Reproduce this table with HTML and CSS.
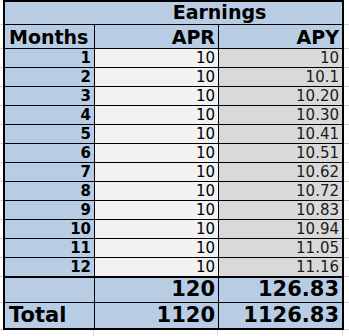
FILE: index.html
```html
<!DOCTYPE html>
<html>
<head>
<meta charset="utf-8">
<link rel="stylesheet" href="styles.css">
</head>
<body>
<div class="sheet">
  <div class="stub stub-left">
    <div class="g g1"></div><div class="g g2"></div>
    <div class="g gd"></div><div class="g gd"></div><div class="g gd"></div><div class="g gd"></div>
    <div class="g gd"></div><div class="g gd"></div><div class="g gd"></div><div class="g gd"></div>
    <div class="g gd"></div><div class="g gd"></div><div class="g gd"></div><div class="g gd"></div>
    <div class="g gs"></div><div class="g gt"></div>
  </div>
  <div class="tbl">
    <div class="c title"><span>Earnings</span></div>
    <div class="c hd left">Months</div><div class="c hd">APR</div><div class="c hd">APY</div>
    <div class="c mo">1</div><div class="c apr">10</div><div class="c apy">10</div>
    <div class="c mo">2</div><div class="c apr">10</div><div class="c apy">10.1</div>
    <div class="c mo">3</div><div class="c apr">10</div><div class="c apy">10.20</div>
    <div class="c mo">4</div><div class="c apr">10</div><div class="c apy">10.30</div>
    <div class="c mo">5</div><div class="c apr">10</div><div class="c apy">10.41</div>
    <div class="c mo">6</div><div class="c apr">10</div><div class="c apy">10.51</div>
    <div class="c mo">7</div><div class="c apr">10</div><div class="c apy">10.62</div>
    <div class="c mo">8</div><div class="c apr">10</div><div class="c apy">10.72</div>
    <div class="c mo">9</div><div class="c apr">10</div><div class="c apy">10.83</div>
    <div class="c mo">10</div><div class="c apr">10</div><div class="c apy">10.94</div>
    <div class="c mo">11</div><div class="c apr">10</div><div class="c apy">11.05</div>
    <div class="c mo">12</div><div class="c apr">10</div><div class="c apy">11.16</div>
    <div class="c sum"></div><div class="c sum">120</div><div class="c sum">126.83</div>
    <div class="c tot left">Total</div><div class="c tot">1120</div><div class="c tot">1126.83</div>
  </div>
  <div class="stub stub-right">
    <div class="g g1"></div><div class="g g2"></div>
    <div class="g gd"></div><div class="g gd"></div><div class="g gd"></div><div class="g gd"></div>
    <div class="g gd"></div><div class="g gd"></div><div class="g gd"></div><div class="g gd"></div>
    <div class="g gd"></div><div class="g gd"></div><div class="g gd"></div><div class="g gd"></div>
    <div class="g gs"></div><div class="g gt"></div>
  </div>
</div>
<div class="below">
  <div class="bcol b1"></div><div class="bcol b2"></div><div class="bcol b3"></div>
</div>
</body>
</html>
```

FILE: styles.css
```css
html, body {
  margin: 0;
  padding: 0;
  background: #ffffff;
}
body {
  font-family: "DejaVu Sans", Verdana, sans-serif;
  color: #000;
  width: 349px;
  height: 336px;
  overflow: hidden;
}
.sheet {
  display: flex;
  align-items: flex-start;
}
.stub {
  display: flex;
  flex-direction: column;
}
.stub-left { width: 3px; }
.stub-right { width: 5px; }
.g { border-bottom: 1px solid #d4d4d4; }
.g1 { height: 24px; }
.g2 { height: 23px; }
.gd { height: 18px; }
.gs { height: 25px; }
.gt { height: 26px; }

.tbl {
  display: grid;
  grid-template-columns: 89px 123px 123px;
  grid-template-rows: 22px 23px repeat(12, 18px) 25px 25px;
  gap: 1px;
  padding: 2px;
  background: #000;
}
.c {
  display: flex;
  align-items: flex-end;
  justify-content: flex-end;
  padding-right: 3px;
  box-sizing: border-box;
  white-space: nowrap;
}
.title {
  grid-column: 1 / 4;
  background: #b8cce4;
  justify-content: center;
  padding: 0 0 1px 92px;
  font-weight: bold;
  font-size: 19px;
  line-height: 22px;
}
.hd {
  background: #b8cce4;
  font-weight: bold;
  font-size: 19px;
  line-height: 22px;
}
.left {
  justify-content: flex-start;
  padding-left: 4px;
}
.mo {
  background: #b8cce4;
  font-weight: bold;
  font-size: 15px;
  line-height: 17px;
  padding-right: 3px;
}
.apr {
  background: #f2f2f2;
  font-size: 15px;
  line-height: 17px;
}
.apy {
  background: #d9d9d9;
  font-size: 15px;
  line-height: 17px;
  color: #1a1a1a;
}
.sum, .tot {
  background: #b8cce4;
  font-weight: bold;
  font-size: 21px;
  line-height: 24px;
  padding-bottom: 1px;
}
.sum { border-top: 1px solid #000; }

.below {
  display: flex;
  height: 6px;
}
.bcol {
  border-right: 1px solid #dadada;
}
.b1 { width: 93px; }
.b2 { width: 123px; }
.b3 { width: 124px; }
```
